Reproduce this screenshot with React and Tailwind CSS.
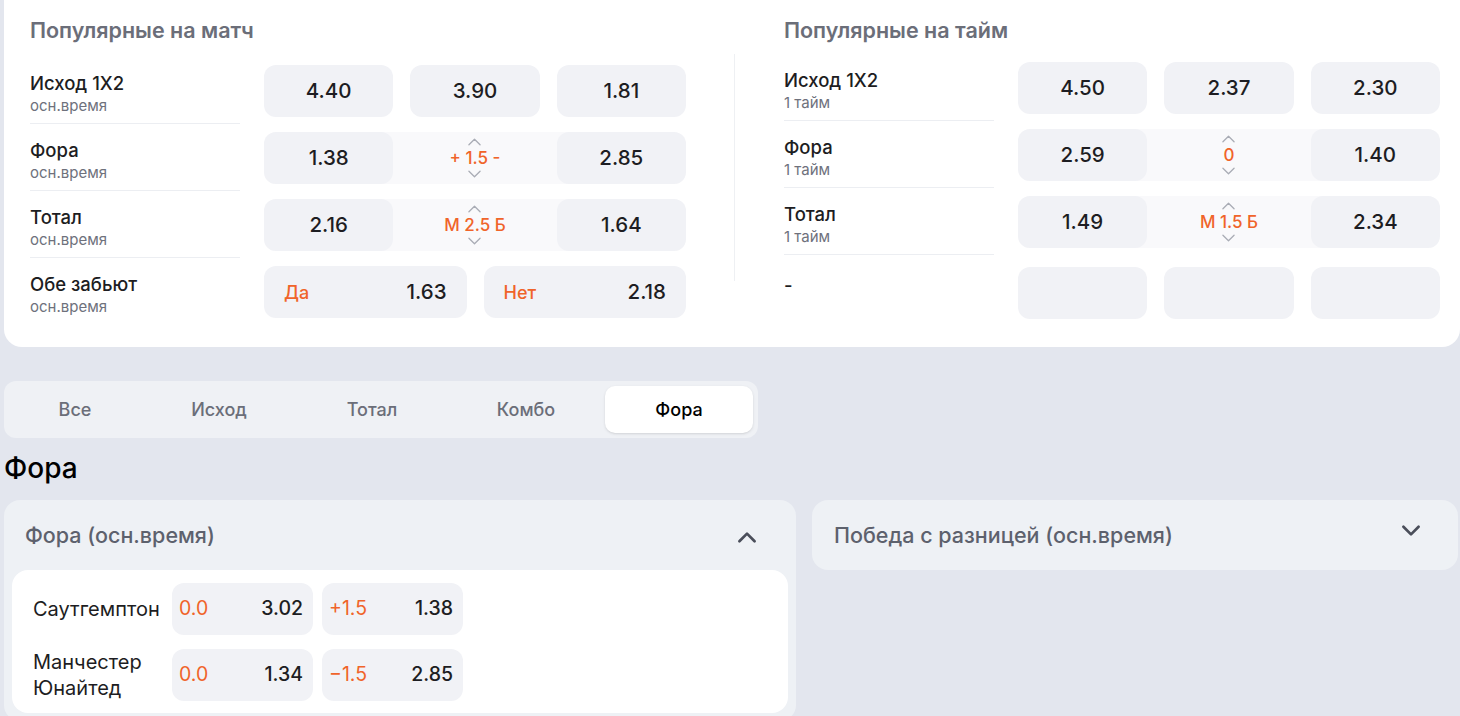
import React from "react";

function Chevron({ dir = "up", className = "" }) {
    return (
        <svg viewBox="0 0 24 24" className={className} fill="none" stroke="currentColor" strokeLinecap="round" strokeLinejoin="round">
            {dir === "up" ? <path d="M5 15l7-7 7 7" /> : <path d="M5 9l7 7 7-7" />}
        </svg>
    );
}

function SmallChevron({ dir = "up" }) {
    return (
        <svg viewBox="0 0 14 8" className="w-[13px] h-[8px] text-[#a9acb5]" fill="none" stroke="currentColor" strokeWidth="1.4" strokeLinecap="round" strokeLinejoin="round">
            {dir === "up" ? <path d="M1 7l6-6 6 6" /> : <path d="M1 1l6 6 6-6" />}
        </svg>
    );
}

function Odd({ value, className = "" }) {
    return (
        <div className={`h-[52px] rounded-[12px] bg-[#f1f2f6] flex items-center justify-center text-[20.5px] font-medium text-[#1d1d22] ${className}`}>
            {value}
        </div>
    );
}

function Line({ value }) {
    return (
        <div className="h-[52px] flex flex-col items-center justify-center gap-[3px] text-[#f0642a] text-[17px] font-medium leading-[18px]">
            <SmallChevron dir="up" />
            <span>{value}</span>
            <SmallChevron dir="down" />
        </div>
    );
}

function MarketRow({ title, sub, last, children }) {
    return (
        <div className="flex items-start gap-6">
            <div className={`w-[210px] h-[59px] pt-[6px] ${last ? "" : "border-b border-[#eceef2]"}`}>
                <div className="text-[18.5px] font-medium text-[#1d1d22] leading-[24px]">{title}</div>
                <div className="text-[15px] text-[#6e717c] leading-[20px] mt-[1px]">{sub}</div>
            </div>
            <div className="flex-1">{children}</div>
        </div>
    );
}

function Three({ a, b, c }) {
    return (
        <div className="grid grid-cols-3 gap-[17px]">
            <Odd value={a} />
            <Odd value={b} />
            <Odd value={c} />
        </div>
    );
}

function Handicap({ a, line, c }) {
    return (
        <div className="grid grid-cols-3 gap-[17px] bg-[#f9f9fb] rounded-[12px]">
            <Odd value={a} />
            <Line value={line} />
            <Odd value={c} />
        </div>
    );
}

function YesNo({ label, value }) {
    return (
        <div className="flex-1 h-[52px] rounded-[12px] bg-[#f1f2f6] flex items-center justify-between px-5">
            <span className="text-[18px] font-medium text-[#f0642a]">{label}</span>
            <span className="text-[20.5px] font-medium text-[#1d1d22]">{value}</span>
        </div>
    );
}

function FoRow({ team, items }) {
    return (
        <div className="flex items-center">
            <div className="w-[139px] text-[20px] leading-[26px] text-[#1d1d22]">{team}</div>
            <div className="flex gap-[9px]">
                {items.map((it, i) => (
                    <div key={i} className="w-[141px] h-[52px] rounded-[12px] bg-[#f1f2f6] flex items-center justify-between pl-[7px] pr-[10px] text-[19.5px]">
                        <span className="text-[#f0642a]">{it[0]}</span>
                        <span className="text-[#1d1d22] font-medium">{it[1]}</span>
                    </div>
                ))}
            </div>
        </div>
    );
}

const tabs = [
    ["Все", "w-[132px]"],
    ["Исход", "w-[156px]"],
    ["Тотал", "w-[150px]"],
    ["Комбо", "w-[158px]"],
    ["Фора", "w-[148px]"],
];

export default function App() {
    return (
        <div className="min-h-screen w-full bg-[#e3e6ee] pl-[4px] font-['Inter',sans-serif] overflow-hidden">
            {/* popular markets */}
            <div className="bg-white rounded-b-[18px] flex pl-[26px] pr-[20px] pt-[16px] pb-[22px]">
                <div className="w-[656px] shrink-0">
                    <div className="text-[21.5px] font-semibold leading-[28px] text-[#6b6e79]">Популярные на матч</div>
                    <div className="mt-[21px] flex flex-col gap-[8px]">
                        <MarketRow title="Исход 1X2" sub="осн.время">
                            <Three a="4.40" b="3.90" c="1.81" />
                        </MarketRow>
                        <MarketRow title="Фора" sub="осн.время">
                            <Handicap a="1.38" line="+ 1.5 -" c="2.85" />
                        </MarketRow>
                        <MarketRow title="Тотал" sub="осн.время">
                            <Handicap a="2.16" line="М 2.5 Б" c="1.64" />
                        </MarketRow>
                        <MarketRow title="Обе забьют" sub="осн.время" last>
                            <div className="flex gap-[17px]">
                                <YesNo label="Да" value="1.63" />
                                <YesNo label="Нет" value="2.18" />
                            </div>
                        </MarketRow>
                    </div>
                </div>

                <div className="ml-[48px] mr-[49px] mt-[38px] mb-[44px] w-px shrink-0 bg-[#eef0f3]" />

                <div className="w-[656px] shrink-0">
                    <div className="text-[21.5px] font-semibold leading-[28px] text-[#6b6e79]">Популярные на тайм</div>
                    <div className="mt-[18px] flex flex-col gap-[8px]">
                        <MarketRow title="Исход 1X2" sub="1 тайм">
                            <Three a="4.50" b="2.37" c="2.30" />
                        </MarketRow>
                        <MarketRow title="Фора" sub="1 тайм">
                            <Handicap a="2.59" line="0" c="1.40" />
                        </MarketRow>
                        <MarketRow title="Тотал" sub="1 тайм">
                            <Handicap a="1.49" line="М 1.5 Б" c="2.34" />
                        </MarketRow>
                        <div className="flex items-start gap-6 mt-[4px]">
                            <div className="w-[210px] pt-[6px] text-[18.5px] font-medium text-[#1d1d22] leading-[24px]">-</div>
                            <div className="flex-1">
                                <Three a="" b="" c="" />
                            </div>
                        </div>
                    </div>
                </div>
            </div>

            {/* tabs */}
            <div className="mt-[34px] w-[754px] h-[57px] rounded-[12px] bg-[#eff1f5] p-[5px] flex">
                {tabs.map(([t, w]) => (
                    <div
                        key={t}
                        className={`${w} rounded-[10px] flex items-center justify-center text-[18px] font-medium ${t === "Фора" ? "bg-white text-black shadow-sm" : "text-[#6b6e79]"}`}
                    >
                        {t}
                    </div>
                ))}
            </div>

            <div className="mt-[13px] text-[28px] font-medium leading-[34px] text-black">Фора</div>

            {/* accordions */}
            <div className="mt-[15px] flex gap-[16px] items-start">
                <div className="w-[792px] shrink-0 bg-[#eef1f5] rounded-[16px] px-[8px] pb-[8px]">
                    <div className="h-[70px] flex items-center justify-between pl-[13px] pr-[28px]">
                        <span className="text-[21.5px] font-medium text-[#5d616d]">Фора (осн.время)</span>
                        <Chevron dir="up" className="w-[26px] h-[26px] text-[#4a4e5a] stroke-[2.5] mt-[6px]" />
                    </div>
                    <div className="bg-white rounded-[16px] pl-[21px] pt-[13px] pb-[12px] flex flex-col gap-[14px]">
                        <FoRow team="Саутгемптон" items={[["0.0", "3.02"], ["+1.5", "1.38"]]} />
                        <FoRow team={<>Манчестер<br />Юнайтед</>} items={[["0.0", "1.34"], ["−1.5", "2.85"]]} />
                    </div>
                </div>
                <div className="flex-1 mr-[2px] h-[70px] bg-[#eef1f5] rounded-[16px] flex items-center justify-between pl-[22px] pr-[34px]">
                    <span className="text-[21.5px] font-medium text-[#5d616d]">Победа с разницей (осн.время)</span>
                    <Chevron dir="down" className="w-[26px] h-[26px] text-[#4a4e5a] stroke-[2.5] -mt-[10px]" />
                </div>
            </div>
        </div>
    );
}
